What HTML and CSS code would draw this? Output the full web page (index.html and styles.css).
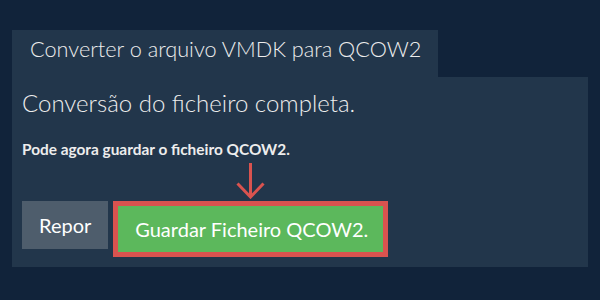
FILE: index.html
```html
<!DOCTYPE html>
<html lang="pt">
  <head>
    <meta charset="UTF-8" />
    <title>Converter o arquivo VMDK para QCOW2</title>
    <link rel="stylesheet" href="styles.css">
  </head>
  <body>
    <div class="container">
      <div class="tab">Converter o arquivo VMDK para QCOW2</div>
      <div class="panel">
        <h2>Conversão do ficheiro completa.</h2>
        <p class="note">Pode agora guardar o ficheiro QCOW2.</p>
        <div class="actions">
          <button class="btn btn-reset">Repor</button>
          <div class="save-wrap">
            <svg class="arrow" width="30" height="36" viewBox="0 0 30 36">
              <path d="M14.5 0 V34 M1.5 20.5 L14.5 34 L27.5 20.5" fill="none" stroke="#d9534f" stroke-width="3" />
            </svg>
            <button class="btn btn-save">Guardar Ficheiro QCOW2.</button>
          </div>
        </div>
      </div>
    </div>
  </body>
</html>
```

FILE: styles.css
```css
body {
  margin: 0;
  padding: 0;
  background-color: #11233a;
  font-family: Lato, "Open Sans", sans-serif;
  color: #ededed;
}
.container {
  padding: 30px 12px 0 12px;
}
.tab {
  display: inline-block;
  background-color: #22364b;
  font-size: 21.7px;
  font-weight: 300;
  line-height: 26px;
  padding: 6px 17px 15px 18px;
}
.panel {
  background-color: #22364b;
  padding: 9px 10px 10px 10px;
}
h2 {
  margin: 0 0 20px 0;
  font-size: 24px;
  font-weight: 300;
  line-height: 34px;
}
.note {
  margin: 0 0 43px 0;
  font-size: 15.4px;
  font-weight: bold;
  line-height: 18px;
}
.actions {
  display: flex;
  align-items: flex-start;
  gap: 5px;
}
.btn {
  font-family: Lato, "Open Sans", sans-serif;
  font-size: 20px;
  line-height: 24px;
  color: #ffffff;
  border: none;
  margin: 0;
  cursor: pointer;
}
.btn-reset {
  background-color: #4e5d6c;
  padding: 12px 17px;
}
.save-wrap {
  position: relative;
  border: 5px solid #d9534f;
}
.btn-save {
  display: block;
  background-color: #5cb85c;
  padding: 11px 15px 11px 17px;
}
.arrow {
  position: absolute;
  left: 50%;
  top: -43px;
  margin-left: -15px;
}
```
